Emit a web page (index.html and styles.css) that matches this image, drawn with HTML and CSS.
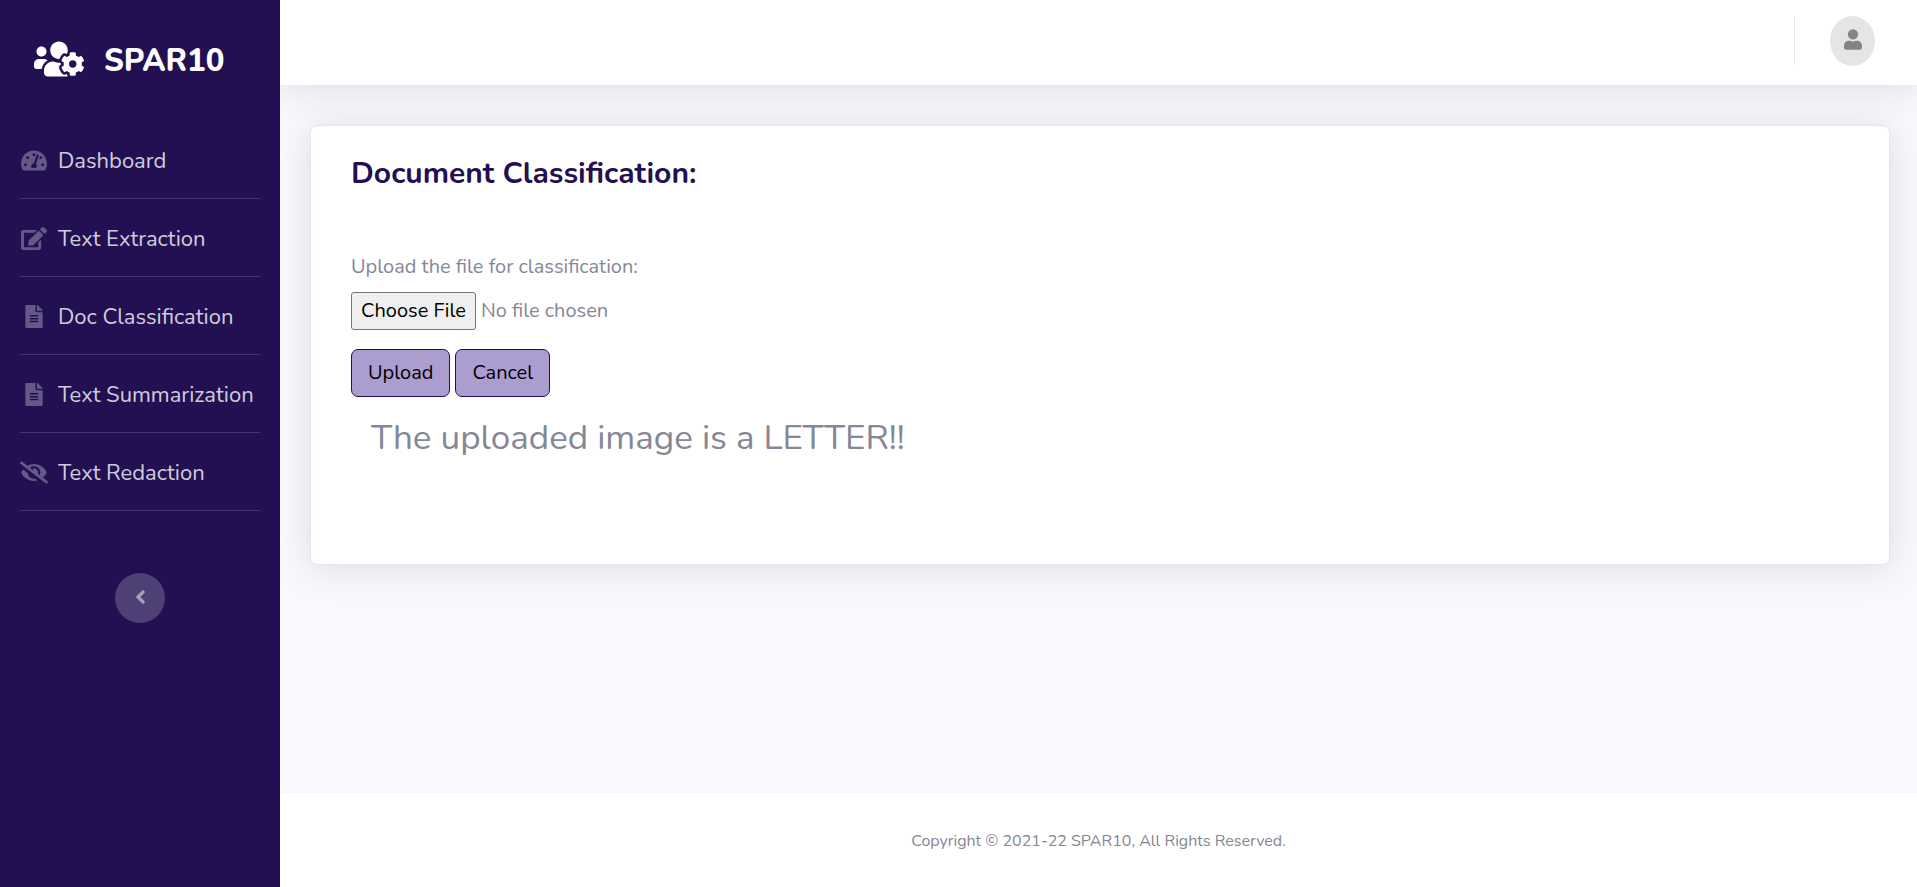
FILE: index.html
```html
<!DOCTYPE html>
<html lang="en">
<head>
<meta charset="utf-8">
<meta name="viewport" content="width=device-width, initial-scale=1">
<title>SPAR10</title>
<link rel="stylesheet" href="styles.css">
</head>
<body>
<div class="app">
  <nav class="sidebar" aria-label="Main">
    <a class="brand" href="#">
      <svg class="brand-icon" viewBox="0 0 640 512" aria-hidden="true"><path d="M610.5 341.3c2.6-14.1 2.6-28.5 0-42.6l25.8-14.9c3-1.7 4.3-5.2 3.3-8.5-6.7-21.6-18.2-41.2-33.2-57.4-2.3-2.5-6-3.1-9-1.4l-25.8 14.9c-10.9-9.3-23.4-16.5-36.9-21.3v-29.8c0-3.4-2.4-6.4-5.7-7.1-22.3-5-45-4.8-66.2 0-3.3.7-5.7 3.7-5.7 7.1v29.8c-13.5 4.8-26 12-36.9 21.3l-25.8-14.9c-2.9-1.7-6.7-1.1-9 1.4-15 16.2-26.5 35.8-33.2 57.4-1 3.3.4 6.8 3.3 8.5l25.8 14.9c-2.6 14.1-2.6 28.5 0 42.6l-25.8 14.9c-3 1.7-4.3 5.2-3.3 8.5 6.7 21.6 18.2 41.1 33.2 57.4 2.3 2.5 6 3.1 9 1.4l25.8-14.9c10.9 9.3 23.4 16.5 36.9 21.3v29.8c0 3.4 2.4 6.4 5.7 7.1 22.3 5 45 4.8 66.2 0 3.3-.7 5.7-3.7 5.7-7.1v-29.8c13.5-4.8 26-12 36.9-21.3l25.8 14.9c2.9 1.7 6.7 1.1 9-1.4 15-16.2 26.5-35.8 33.2-57.4 1-3.3-.4-6.8-3.3-8.5l-25.8-14.9zM496 368.5c-26.8 0-48.5-21.8-48.5-48.5s21.8-48.5 48.5-48.5 48.5 21.8 48.5 48.5-21.7 48.5-48.5 48.5zM96 224c35.3 0 64-28.7 64-64s-28.7-64-64-64-64 28.7-64 64 28.7 64 64 64zm224 32c1.9 0 3.7-.5 5.6-.6 8.3-21.7 20.5-42.1 36.3-59.2 7.4-8 17.9-12.6 28.9-12.6 6.9 0 13.7 1.8 19.6 5.3l7.9 4.6c.8-.5 1.6-.9 2.4-1.4 7-14.6 11.2-30.8 11.2-48 0-61.9-50.1-112-112-112S208 82.1 208 144c0 61.9 50.1 112 112 112zm105.2 194.5c-2.3-1.2-4.6-2.6-6.8-3.9-8.2 4.8-15.3 9.8-27.5 9.8-10.9 0-21.4-4.6-28.9-12.6-18.3-19.8-32.3-43.9-40.2-69.6-10.7-34.5 24.9-49.7 25.8-50.3-.1-2.6-.1-5.2 0-7.8l-7.9-4.6c-3.8-2.2-7-5-9.8-8.1-3.3.2-6.5.6-9.8.6-24.6 0-47.6-6-68.5-16h-8.3C179.6 288 128 339.6 128 403.2V432c0 26.5 21.5 48 48 48h255.4c-3.7-6-6.2-12.8-6.2-20.3v-9.2zM173.1 274.6C161.5 263.1 145.6 256 128 256H64c-35.3 0-64 28.7-64 64v32c0 17.7 14.3 32 32 32h65.9c6.3-47.4 34.9-87.3 75.2-109.4z"/></svg>
      <span class="brand-name">SPAR10</span>
    </a>
    <ul class="menu">
      <li class="menu-item"><a class="menu-link" href="#">
        <svg class="menu-icon" viewBox="0 0 576 512" aria-hidden="true"><path d="M288 32C128.94 32 0 160.94 0 320c0 52.8 14.25 102.26 39.06 144.8 5.61 9.62 16.3 15.2 27.44 15.2h443c11.14 0 21.83-5.58 27.44-15.2C561.75 422.26 576 372.8 576 320c0-159.06-128.94-288-288-288zm0 64c14.71 0 26.58 10.13 30.32 23.65-1.11 2.26-2.64 4.23-3.45 6.67l-9.22 27.67c-5.13 3.49-10.97 6.01-17.64 6.01-17.67 0-32-14.33-32-32S270.33 96 288 96zM96 384c-17.67 0-32-14.33-32-32s14.33-32 32-32 32 14.33 32 32-14.33 32-32 32zm48-160c-17.67 0-32-14.33-32-32s14.33-32 32-32 32 14.33 32 32-14.33 32-32 32zm246.77-72.41l-61.33 184C343.13 347.33 352 364.54 352 384c0 11.72-3.38 22.55-8.88 32H232.88c-5.5-9.45-8.88-20.28-8.88-32 0-33.94 26.5-61.43 59.9-63.59l61.34-184.01c4.17-12.56 17.73-19.45 30.36-15.17 12.57 4.19 19.35 17.79 15.17 30.36zm14.66 57.2l15.52-46.55c3.47-1.29 7.13-2.23 11.05-2.23 17.67 0 32 14.33 32 32s-14.33 32-32 32c-11.38-.01-21.29-6.01-26.57-15.22zM480 384c-17.67 0-32-14.33-32-32s14.33-32 32-32 32 14.33 32 32-14.33 32-32 32z"/></svg>
        <span class="menu-text">Dashboard</span></a></li>
      <li class="menu-item"><a class="menu-link" href="#">
        <svg class="menu-icon" viewBox="0 0 576 512" aria-hidden="true"><path d="M402.6 83.2l90.2 90.2c3.8 3.8 3.8 10 0 13.8L274.4 405.6l-92.8 10.3c-12.4 1.4-22.9-9.1-21.5-21.5l10.3-92.8L388.8 83.2c3.8-3.8 10-3.8 13.8 0zm162-22.9l-48.8-48.8c-15.2-15.2-39.9-15.2-55.2 0l-35.4 35.4c-3.8 3.8-3.8 10 0 13.8l90.2 90.2c3.8 3.8 10 3.8 13.8 0l35.4-35.4c15.2-15.3 15.2-40 0-55.2zM384 346.2V448H64V128h229.8c3.2 0 6.2-1.3 8.5-3.5l40-40c7.6-7.6 2.2-20.5-8.5-20.5H48C21.5 64 0 85.5 0 112v352c0 26.5 21.5 48 48 48h352c26.5 0 48-21.5 48-48V306.2c0-10.7-12.9-16-20.5-8.5l-40 40c-2.2 2.3-3.5 5.3-3.5 8.5z"/></svg>
        <span class="menu-text">Text Extraction</span></a></li>
      <li class="menu-item"><a class="menu-link" href="#">
        <svg class="menu-icon" viewBox="0 0 384 512" aria-hidden="true"><path d="M224 136V0H24C10.7 0 0 10.7 0 24v464c0 13.3 10.7 24 24 24h336c13.3 0 24-10.7 24-24V160H248c-13.2 0-24-10.8-24-24zm64 236c0 6.6-5.4 12-12 12H108c-6.6 0-12-5.4-12-12v-8c0-6.6 5.4-12 12-12h168c6.6 0 12 5.4 12 12v8zm0-64c0 6.6-5.4 12-12 12H108c-6.6 0-12-5.4-12-12v-8c0-6.6 5.4-12 12-12h168c6.6 0 12 5.4 12 12v8zm0-72v8c0 6.6-5.4 12-12 12H108c-6.6 0-12-5.4-12-12v-8c0-6.6 5.4-12 12-12h168c6.6 0 12 5.4 12 12zm96-114.1v6.1H256V0h6.1c6.4 0 12.5 2.5 17 7l97.9 98c4.5 4.5 7 10.6 7 16.9z"/></svg>
        <span class="menu-text">Doc Classification</span></a></li>
      <li class="menu-item"><a class="menu-link" href="#">
        <svg class="menu-icon" viewBox="0 0 384 512" aria-hidden="true"><path d="M224 136V0H24C10.7 0 0 10.7 0 24v464c0 13.3 10.7 24 24 24h336c13.3 0 24-10.7 24-24V160H248c-13.2 0-24-10.8-24-24zm64 236c0 6.6-5.4 12-12 12H108c-6.6 0-12-5.4-12-12v-8c0-6.6 5.4-12 12-12h168c6.6 0 12 5.4 12 12v8zm0-64c0 6.6-5.4 12-12 12H108c-6.6 0-12-5.4-12-12v-8c0-6.6 5.4-12 12-12h168c6.6 0 12 5.4 12 12v8zm0-72v8c0 6.6-5.4 12-12 12H108c-6.6 0-12-5.4-12-12v-8c0-6.6 5.4-12 12-12h168c6.6 0 12 5.4 12 12zm96-114.1v6.1H256V0h6.1c6.4 0 12.5 2.5 17 7l97.9 98c4.5 4.5 7 10.6 7 16.9z"/></svg>
        <span class="menu-text">Text Summarization</span></a></li>
      <li class="menu-item"><a class="menu-link" href="#">
        <svg class="menu-icon" viewBox="0 0 640 512" aria-hidden="true"><path d="M320 400c-75.85 0-137.25-58.71-142.9-133.11L72.2 185.82c-13.79 17.3-26.48 35.59-36.72 55.59a32.35 32.35 0 0 0 0 29.19C89.71 376.41 197.07 448 320 448c26.91 0 52.87-4 77.89-10.46L346 397.39a144.13 144.13 0 0 1-26 2.61zm313.82 58.1l-110.55-85.44a331.25 331.25 0 0 0 81.25-102.07 32.35 32.35 0 0 0 0-29.19C550.29 135.59 442.93 64 320 64a308.15 308.15 0 0 0-147.32 37.7L45.46 3.37A16 16 0 0 0 23 6.18L3.37 31.45A16 16 0 0 0 6.18 53.9l588.36 454.73a16 16 0 0 0 22.46-2.81l19.64-25.27a16 16 0 0 0-2.82-22.45zm-183.72-142l-39.3-30.38A94.75 94.75 0 0 0 416 256a94.76 94.76 0 0 0-121.31-92.21A47.65 47.65 0 0 1 304 192a46.64 46.64 0 0 1-1.54 10l-73.61-56.89A142.31 142.31 0 0 1 320 112a143.92 143.92 0 0 1 144 144c0 21.63-5.29 41.79-13.9 60.11z"/></svg>
        <span class="menu-text">Text Redaction</span></a></li>
    </ul>
    <button class="collapse" type="button" aria-label="Collapse sidebar">
      <svg class="collapse-icon" viewBox="0 0 256 512" aria-hidden="true"><path d="M31.7 239l136-136c9.4-9.4 24.6-9.4 33.9 0l22.6 22.6c9.4 9.4 9.4 24.6 0 33.9L127.9 256l96.4 96.4c9.4 9.4 9.4 24.6 0 33.9L201.7 409c-9.4 9.4-24.6 9.4-33.9 0l-136-136c-9.5-9.4-9.5-24.6-.1-34z"/></svg>
    </button>
  </nav>
  <div class="page">
    <header class="topbar">
      <div class="topbar-divider"></div>
      <button class="avatar" type="button" aria-label="Account">
        <svg class="avatar-icon" viewBox="0 0 448 512" aria-hidden="true"><circle cx="224" cy="128" r="128"/><path d="M120 288h31c45 21 101 21 146 0h31c66 0 120 54 120 120v56c0 26.500-21.500 48-48 48H48c-26.500 0-48-21.500-48-48v-56c0-66 54-120 120-120z"/></svg>
      </button>
    </header>
    <main class="content">
      <section class="card">
        <h1 class="card-title">Document Classification:</h1>
        <form class="upload-form">
          <label class="upload-label" for="file">Upload the file for classification:</label>
          <input class="file-input" id="file" type="file">
          <div class="actions">
            <button class="btn" type="button">Upload</button>
            <button class="btn" type="button">Cancel</button>
          </div>
        </form>
        <p class="result">The uploaded image is a LETTER!!</p>
      </section>
    </main>
    <footer class="footer">Copyright © 2021-22 SPAR10, All Rights Reserved.</footer>
  </div>
</div>
</body>
</html>
```
FILE: styles.css
```css
*, *::before, *::after { box-sizing: border-box; }

body {
  margin: 0;
  font-family: Nunito, Lato, sans-serif;
  font-size: 20px;
  line-height: 30px;
  color: #858796;
  background: #f8f9fc;
}

.app { display: flex; min-height: 100vh; }

.sidebar {
  position: relative;
  z-index: 1;
  flex: 0 0 280px;
  display: flex;
  flex-direction: column;
  align-items: center;
  background: #221053;
}

.brand {
  display: flex;
  align-items: center;
  align-self: stretch;
  gap: 20px;
  padding: 39px 20px 0 34px;
  color: #fff;
  font-size: 31px;
  font-weight: 800;
  line-height: 36px;
  text-decoration: none;
}
.brand-icon { width: 50px; height: 40px; fill: currentColor; }
.brand-name { padding-top: 4px; }

.menu {
  align-self: stretch;
  margin: 42px 20px 0;
  padding: 0;
  list-style: none;
}
.menu-item { border-bottom: 1px solid rgba(255, 255, 255, .15); }
.menu-link {
  display: flex;
  align-items: center;
  gap: 10px;
  padding: 24px 0 23px;
  color: rgba(255, 255, 255, .8);
  font-size: 22px;
  line-height: 28px;
  text-decoration: none;
  white-space: nowrap;
}
.menu-icon { flex: none; width: 28px; height: 23px; fill: rgba(255, 255, 255, .3); }
.menu-text { padding-top: 2px; }

.collapse {
  display: flex;
  align-items: center;
  justify-content: center;
  width: 50px;
  height: 50px;
  margin-top: 62px;
  padding: 0 0 2px;
  border: 0;
  border-radius: 50%;
  background: rgba(255, 255, 255, .2);
}
.collapse-icon { width: 11px; height: 22px; fill: rgba(255, 255, 255, .5); }

.page { flex: 1; min-width: 0; display: flex; flex-direction: column; }

.topbar {
  display: flex;
  justify-content: flex-end;
  align-items: flex-start;
  gap: 35px;
  height: 85px;
  padding: 16px 42px 0;
  background: #fff;
  box-shadow: 0 3px 35px rgba(58, 59, 69, .15);
}
.topbar-divider { width: 1px; height: 48px; margin-top: 1px; background: #e3e6f0; }
.avatar {
  display: flex;
  align-items: center;
  justify-content: center;
  width: 45px;
  height: 50px;
  padding: 0 0 3px;
  border: 0;
  border-radius: 50%;
  background: #e5e5e5;
}
.avatar-icon { width: 18px; height: 21px; fill: #858383; }

.content { flex: 1; padding: 40px 27px 40px 30px; }

.card {
  padding: 30px 40px 105px;
  border: 1px solid #e3e6f0;
  border-radius: 7px;
  background: #fff;
  box-shadow: 0 3px 35px rgba(58, 59, 69, .15);
}
.card-title {
  margin: 0;
  color: #221053;
  font-size: 30px;
  font-weight: 700;
  line-height: 36px;
}
.upload-form { margin-top: 60px; }
.upload-label { display: block; }
.file-input {
  display: block;
  margin-top: 10px;
  font: inherit;
  color: inherit;
}
.file-input::file-selector-button {
  margin-right: 5px;
  padding: 3px 9px;
  border: 1px solid #767676;
  border-radius: 3px;
  background: #efefef;
  color: #000;
  font: inherit;
}
.actions { display: flex; gap: 5px; margin-top: 19px; }
.btn {
  padding: 8px 16px;
  border: 1px solid #221053;
  border-radius: 7px;
  background: #ac9dd1;
  color: #000;
  font: inherit;
}
.result {
  margin: 20px 0 0 20px;
  font-size: 35px;
  line-height: 42px;
}

.footer {
  padding: 38px 20px 36px;
  background: #fff;
  font-size: 16px;
  line-height: 20px;
  text-align: center;
}
```
